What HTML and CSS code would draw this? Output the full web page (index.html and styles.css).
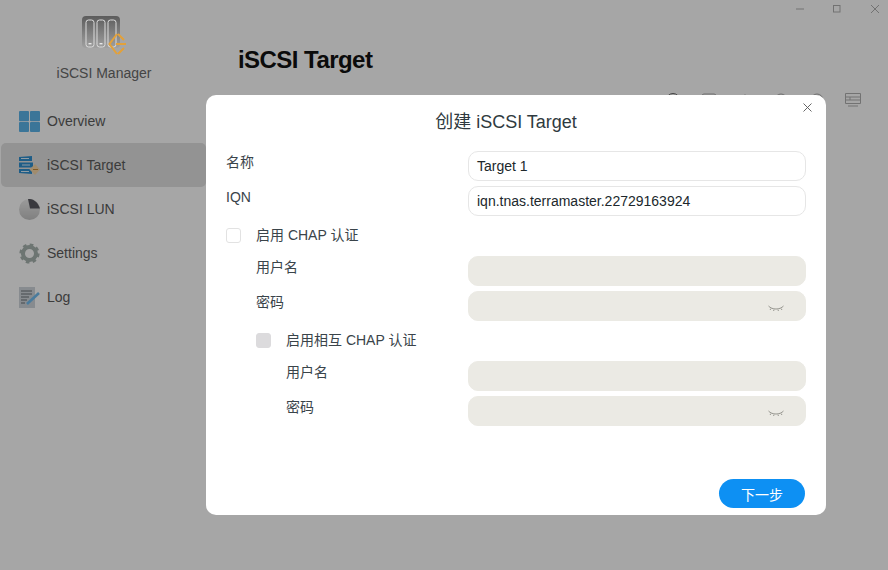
FILE: index.html
```html
<!DOCTYPE html>
<html lang="zh">
<head>
<meta charset="utf-8">
<title>iSCSI Manager</title>
<link rel="stylesheet" href="styles.css">
</head>
<body>
<div class="app">
  <aside class="sidebar">
    <div class="brand">
      <svg class="brand-icon" width="48" height="42" viewBox="0 0 48 42">
        <defs><linearGradient id="lg" x1="0" y1="0" x2="0" y2="1"><stop offset="0" stop-color="#5c5c5c"/><stop offset="1" stop-color="#a0a0a0"/></linearGradient></defs>
        <rect x="1" y="0" width="38" height="32" rx="4" fill="url(#lg)"/>
        <g fill="none" stroke="#dcdcdc" stroke-width="1">
          <rect x="5" y="4" width="8" height="27" rx="2.5"/>
          <rect x="16" y="4" width="8" height="27" rx="2.5"/>
          <rect x="27" y="4" width="8" height="27" rx="2.5"/>
        </g>
        <g fill="#e8e8e8"><rect x="7.5" y="27" width="3" height="1.4"/><rect x="18.5" y="27" width="3" height="1.4"/></g>
        <path d="M36 18 L28.5 28 L36 38 M37 18 L43 24 M37 38 L43 32 M35 28 H45" fill="none" stroke="#e3a13a" stroke-width="2"/>
      </svg>
      <div class="brand-name">iSCSI Manager</div>
    </div>
    <nav class="nav">
      <div class="nav-item">
        <svg class="nav-icon" viewBox="0 0 21 21"><g fill="#5bb4ea"><rect x="0" y="0" width="10" height="10.2" rx="1"/><rect x="11" y="0" width="10" height="10.2" rx="1"/><rect x="0" y="11" width="10" height="10" rx="1"/><rect x="11" y="11" width="10" height="10" rx="1"/></g></svg>
        <span>Overview</span>
      </div>
      <div class="nav-item active">
        <svg class="nav-icon" viewBox="0 0 21 21"><g fill="#2f8fd0"><path d="M0 2L13 1V6H0Z"/><rect x="0" y="7.5" width="14" height="5"/><path d="M0 14H13V19L0 18Z"/></g><g fill="#dff0fa"><rect x="2" y="3" width="8" height="1"/><rect x="3" y="9.5" width="8" height="1"/><rect x="2" y="16" width="8" height="1"/></g><path d="M16 9 L10.5 14.5 L16 20 L21 14.5 Z" fill="#f7d8a8"/><path d="M14 14.5 H19" stroke="#c98c3a" stroke-width="1"/></svg>
        <span>iSCSI Target</span>
      </div>
      <div class="nav-item">
        <svg class="nav-icon" viewBox="0 0 21 21">
          <defs><linearGradient id="pie" x1="0" y1="0" x2="0" y2="1"><stop offset="0" stop-color="#eeeeee"/><stop offset="1" stop-color="#c4c4c4"/></linearGradient></defs>
          <circle cx="10.5" cy="10.5" r="10.5" fill="url(#pie)"/>
          <path d="M11 9.5 L9 0 C14 -0.5 19 3 21 9.5 Z" fill="#5a5a62"/>
        </svg>
        <span>iSCSI LUN</span>
      </div>
      <div class="nav-item">
        <svg class="nav-icon" viewBox="0 0 21 21"><circle cx="10.5" cy="10.5" r="6.5" fill="none" stroke="#a8b4b0" stroke-width="4"/><circle cx="10.5" cy="10.5" r="8.8" fill="none" stroke="#a8b4b0" stroke-width="2.6" stroke-dasharray="3.6 3.3"/></svg>
        <span>Settings</span>
      </div>
      <div class="nav-item">
        <svg class="nav-icon" viewBox="0 0 21 21"><rect x="0" y="0" width="16" height="21" fill="#cfd6dc"/><g stroke="#6b7176" stroke-width="1"><path d="M2 4H13M2 7H13M2 10H10M2 13H8M2 16H6"/></g><path d="M8 17 L20 6" stroke="#72bdf0" stroke-width="2.6"/></svg>
        <span>Log</span>
      </div>
    </nav>
  </aside>
  <main class="content">
    <div class="window-bar">
      <svg class="win-icon" viewBox="0 0 10 10"><path d="M0 5H8" stroke="#b0b0b0"/></svg>
      <svg class="win-icon" viewBox="0 0 10 10"><rect x="0.5" y="1.5" width="6.5" height="6.5" fill="none" stroke="#b0b0b0"/></svg>
      <svg class="win-icon" viewBox="0 0 10 10"><path d="M1 1L9 9M9 1L1 9" stroke="#b0b0b0"/></svg>
    </div>
    <h1 class="page-title">iSCSI Target</h1>
    <div class="toolbar">
      <svg class="tool" viewBox="0 0 16 16"><circle cx="8" cy="8" r="6.5" fill="none" stroke="#666"/></svg>
      <svg class="tool" viewBox="0 0 16 16"><rect x="1" y="2" width="14" height="12" rx="2" fill="none" stroke="#aaa"/></svg>
      <svg class="tool" viewBox="0 0 16 16"><circle cx="8" cy="6" r="3" fill="none" stroke="#aaa"/></svg>
      <svg class="tool" viewBox="0 0 16 16"><circle cx="8" cy="8" r="6" fill="none" stroke="#aaa"/></svg>
      <svg class="tool" viewBox="0 0 16 16"><circle cx="8" cy="8" r="6" fill="none" stroke="#aaa"/></svg>
      <svg class="tool" viewBox="0 0 16 16"><path d="M0.5 1.5H15.5V11.5H0.5ZM0.5 5H15.5M0.5 8H15.5M5 5V8M3 14H13" fill="none" stroke="#b0b0b0"/></svg>
    </div>
  </main>
</div>

<div class="overlay">
  <section class="dialog">
    <svg class="close" viewBox="0 0 9 9"><path d="M0.5 0.5L8.5 8.5M8.5 0.5L0.5 8.5" stroke="#555" stroke-width="0.9"/></svg>
    <h2 class="dialog-title">创建 iSCSI Target</h2>
    <div class="form">
      <div class="row">
        <label class="label">名称</label>
        <div class="field">Target 1</div>
      </div>
      <div class="row">
        <label class="label">IQN</label>
        <div class="field">iqn.tnas.terramaster.22729163924</div>
      </div>
      <div class="check-row">
        <span class="check"></span>
        <span class="label">启用 CHAP 认证</span>
      </div>
      <div class="row indent">
        <label class="label">用户名</label>
        <div class="field disabled"></div>
      </div>
      <div class="row indent">
        <label class="label">密码</label>
        <div class="field disabled"><svg class="eye" viewBox="0 0 16 7"><path d="M0.5 1C4 5 12 5 15.5 1M3 3.5L2 5M6 4.6L5.6 6M10 4.6L10.4 6M13 3.5L14 5" fill="none" stroke="#96968f" stroke-width="1"/></svg></div>
      </div>
      <div class="check-row indent sub-check">
        <span class="check off"></span>
        <span class="label">启用相互 CHAP 认证</span>
      </div>
      <div class="row indent2">
        <label class="label">用户名</label>
        <div class="field disabled"></div>
      </div>
      <div class="row indent2">
        <label class="label">密码</label>
        <div class="field disabled"><svg class="eye" viewBox="0 0 16 7"><path d="M0.5 1C4 5 12 5 15.5 1M3 3.5L2 5M6 4.6L5.6 6M10 4.6L10.4 6M13 3.5L14 5" fill="none" stroke="#96968f" stroke-width="1"/></svg></div>
      </div>
    </div>
    <div class="actions"><button class="next">下一步</button></div>
  </section>
</div>
</body>
</html>
```
FILE: styles.css
```css
* { box-sizing: border-box; }
html, body { margin: 0; height: 100%; }
body {
  width: 888px;
  height: 570px;
  overflow: hidden;
  position: relative;
  font-family: "Liberation Sans", "Noto Sans CJK SC", sans-serif;
  font-size: 14px;
  color: #2f3a40;
  background: #fff;
}
.app { display: flex; height: 570px; }
.sidebar { width: 206px; flex: none; }
.brand { display: flex; flex-direction: column; align-items: center; padding: 16px 0 0 2px; height: 99px; }
.brand-icon { display: block; margin-left: 2px; position: relative; z-index: 2; }
.brand-name { margin-top: 6px; font-size: 14px; color: #6a6a6a; line-height: 18px; }
.nav { display: flex; flex-direction: column; }
.nav-item { display: flex; align-items: center; gap: 7px; height: 44px; padding-left: 18px; margin-left: 1px; color: #5c5c5c; font-size: 14px; border-radius: 5px; }
.nav-item.active { background: #e2e2e2; }
.nav-icon { width: 21px; height: 21px; flex: none; }
.content { flex: 1; position: relative; padding-left: 32px; }
.window-bar { position: absolute; top: 4px; right: 8px; display: flex; gap: 27px; }
.win-icon { width: 10px; height: 10px; }
.page-title { margin: 45px 0 0; font-size: 24px; line-height: 30px; font-weight: 700; color: #111; letter-spacing: -0.55px; }
.toolbar { display: flex; gap: 20px; justify-content: flex-end; padding: 17px 27px 0 0; }
.tool { width: 16px; height: 16px; }
.overlay { position: absolute; inset: 0; background: rgba(0, 0, 0, 0.35); }
.dialog { position: absolute; left: 206px; top: 95px; width: 620px; height: 420px; background: #fff; border-radius: 10px; padding: 0 20px; display: flex; flex-direction: column; }
.close { position: absolute; top: 8px; right: 14px; width: 9px; height: 9px; }
.dialog-title { margin: 15px 0 0; padding-right: 20px; font-size: 18px; line-height: 25px; font-weight: 400; text-align: center; color: #2f3a40; }
.form { margin-top: 16px; display: flex; flex-direction: column; }
.row { display: flex; justify-content: space-between; height: 30px; margin-bottom: 5px; }
.label { font-size: 14px; line-height: 20px; color: #3a444a; }
.row .label { margin-top: 1px; }
.field { width: 338px; height: 30px; border: 1px solid #e6e6e6; border-radius: 10px; padding: 0 8px; font-size: 14px; line-height: 28px; color: #20282c; position: relative; }
.field.disabled { background: #ebeae4; border-color: #ebeae4; }
.eye { position: absolute; right: 21px; top: 13px; width: 16px; height: 7px; }
.check-row { display: flex; align-items: center; gap: 15px; height: 20px; margin: 4px 0 11px; }
.check { width: 15px; height: 15px; border: 1px solid #e2e2e2; border-radius: 3px; flex: none; }
.check.off { background: #dcdbdd; border-color: #dcdbdd; }
.indent { padding-left: 30px; }
.indent2 { padding-left: 60px; }
.sub-check { margin: 4px 0 11px; }
.actions { margin-top: auto; display: flex; justify-content: flex-end; padding: 0 1px 7px 0; }
.next { width: 86px; height: 29px; border: 0; border-radius: 15px; background: #0d90f3; color: #fff; font: 14px "Liberation Sans", "Noto Sans CJK SC", sans-serif; padding: 0; }
```
